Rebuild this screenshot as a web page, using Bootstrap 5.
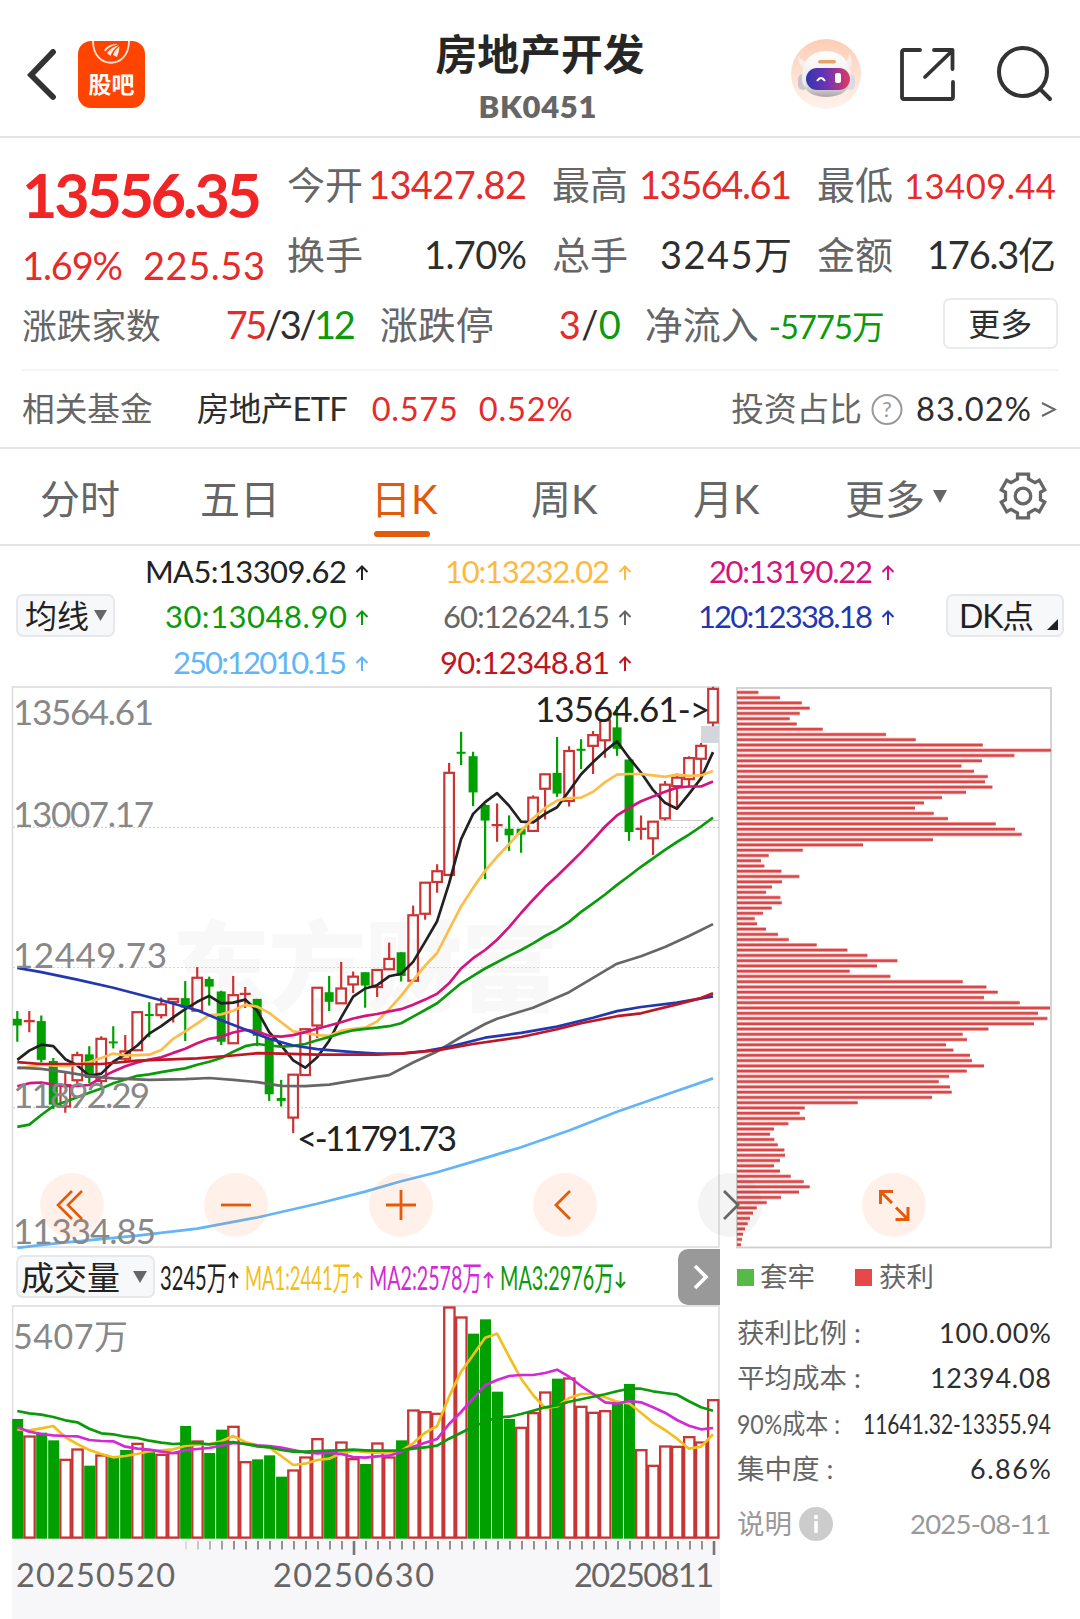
<!DOCTYPE html>
<html lang="zh-CN">
<head>
<meta charset="utf-8">
<meta name="viewport" content="width=device-width, initial-scale=1">
<title>房地产开发 BK0451</title>
<link rel="stylesheet" href="https://cdn.jsdelivr.net/npm/bootstrap@5.3.0/dist/css/bootstrap.min.css">
<style>
:root{--up:#e52b2b;--down:#0a9a0a;--ink:#2e2e2e;--dim:#666;--line:#e2e4e6}
body{font-family:Lato,"Noto Sans CJK SC",sans-serif;line-height:1;color:var(--ink);background:#fff;width:1080px;height:1619px;overflow:hidden}
svg{display:block;flex:none}
span{white-space:nowrap}
.up{color:var(--up)}.down{color:var(--down)}.dim{color:var(--dim)}
.f27{font-size:27.5px}.f32{font-size:32.7px}.f34{font-size:34.7px}.f38{font-size:38px}
.topbar{height:138px;border-bottom:2px solid var(--line);padding:38px 27px 0 27px}
.side-l{width:262px;padding-top:3px}.side-r{width:262px}
.app-logo{width:67px;height:67px;border-radius:13px;background:#ff4400;color:#fff;font-weight:700;font-size:23px;margin-left:21px;padding-bottom:12px}
.app-logo svg{left:13px;top:0}
.title-text{font-size:41.8px;font-weight:600;color:#262626;margin-top:-4px}
.code-text{font-size:31px;font-weight:800;color:var(--dim);margin:15px 5px 0 0}
.quote{height:231px;padding:27px 0 0 22px}
.price-col{width:265px;margin-top:-1px}
.price{font-size:61px;font-weight:700;color:#f02626}
.cells{width:768px;display:grid;grid-template-columns:240px 240px 239px;column-gap:25px}
.cells>div{height:70px}
.mix{height:60px}
.more-btn{width:115px;height:51px;border:2px solid #e8eaec;border-radius:7px;font-size:32px;margin:-7px 0 0 58px}
.fund{margin:0 22px;height:78px;border-top:2px solid #f3f4f5;padding-top:22px}
.tabs-k{height:99px;border-top:2px solid var(--line);border-bottom:2px solid var(--line);font-size:40px;color:var(--dim)}
.tabs-k>div{height:95px;padding-top:30px}
.tab-on{color:#e35a0a}
.tab-on i{display:block;width:56px;height:6px;border-radius:3px;background:#e35a0a;margin:12px 0 0 3px}
.ma-bar{height:139px;padding:8px 16px 0}
.chip{height:43px;border:2px solid #e6e8eb;border-radius:7px;background:#f7f8fa;color:#222;font-size:32px}
.ma-grid{display:grid;grid-template-columns:254px 263px 263px;grid-auto-rows:45.6px;font-size:31px;width:832px;align-content:start;padding-top:1.5px}
.ma-grid>div{display:flex;justify-content:flex-end;align-items:baseline}
.ma-grid svg{margin-left:8px}
.charts{height:563px;padding-left:12px}
.charts svg{overflow:visible}
.ctl{left:40px;top:488px;gap:100.4px}
.ctl>div{width:64px;height:64px;border-radius:50%;background:rgba(255,113,40,.1)}
.ctl>.off{background:rgba(60,60,60,.06)}
.lower{padding-left:12px}
.vol-head{width:708px;height:57px;padding-left:4px}
.vol-head .chip span{padding-top:1px}
.vol-figs{font-size:33.5px;width:523px;padding-left:5px}
.vol-figs span{padding-top:2px}
.vol-next{width:42px;height:56px;border-radius:10px 0 0 10px;background:#999}
.costs{width:314px;margin-left:16px;padding-top:15px}
.sq{width:17px;height:17px}
.cost-row{height:45.3px}
.val{font-size:27px}
.info-dot{width:34px;height:34px;border-radius:50%;background:#ccc}
</style>
</head>
<body>
<header class="topbar d-flex justify-content-between align-items-start">
  <div class="side-l d-flex align-items-center">
    <svg width="30" height="52" viewBox="0 0 30 52"><path d="M26 3L4 26L26 48" fill="none" stroke="#333" stroke-width="5.8" stroke-linecap="round"/></svg>
    <div class="app-logo position-relative d-flex align-items-end justify-content-center">
      <svg class="position-absolute" width="41" height="26" viewBox="0 0 41 26"><path d="M2 0C2 29 38 29 38 0" fill="none" stroke="#ffe3d8" stroke-width="1.8"/><path d="M13 9Q18 2 27 3.500Q18 5 14.500 10.500ZM16 12Q21 5 28 4.500Q22 8 19.500 15ZM22 14Q24 8 28.500 5.500Q28 12 26 16Z" fill="#ffe9df"/></svg>
      <span>股吧</span>
    </div>
  </div>
  <div class="text-center">
    <div class="title-text"><span>房地产开发</span></div>
    <div class="code-text"><span class="fit" data-w="118">BK0451</span></div>
  </div>
  <div class="side-r d-flex">
    <svg width="70" height="72" viewBox="0 0 70 72">
      <defs><linearGradient id="sky" x2="0" y2="1"><stop stop-color="#fdcdb4"/><stop offset="1" stop-color="#fff3ed"/></linearGradient><linearGradient id="visor"><stop stop-color="#3436ae"/><stop offset=".5" stop-color="#7134b0"/><stop offset="1" stop-color="#e23a62"/></linearGradient><linearGradient id="shell" x2="0" y2="1"><stop stop-color="#fff"/><stop offset=".7" stop-color="#ece9ea"/><stop offset="1" stop-color="#aaa5ab"/></linearGradient></defs>
      <circle cx="35" cy="36" r="35" fill="url(#sky)"/>
      <path d="M7 17Q9 23 16 23L14 31Q6 26 7 17ZM58 15Q62 20 60 29L53 26Q58 22 58 15Z" fill="#f6eeec"/>
      <rect x="7" y="36" width="10" height="16" rx="5" fill="#cbc6cb"/><rect x="55" y="36" width="9" height="16" rx="4.500" fill="#dedade"/>
      <path d="M11 38Q12 14 35 13Q58 14 60 38Q61 58 35 59Q10 58 11 38Z" fill="url(#shell)"/>
      <rect x="27" y="22" width="18" height="3.500" rx="1.700" fill="#e5a36d"/>
      <rect x="15" y="30" width="44" height="22" rx="11" fill="url(#visor)"/>
      <path d="M26 43Q30 37 34 43" fill="none" stroke="#fff" stroke-width="2"/><rect x="44" y="35" width="6" height="10" rx="2" fill="#fff"/>
    </svg>
    <svg style="margin:8px 0 0 38px" width="56" height="56" viewBox="0 0 56 56" fill="none" stroke="#333" stroke-width="3.8" stroke-linecap="round" stroke-linejoin="round"><path d="M21 4H5Q3 4 3 6V51Q3 53 5 53H52Q54 53 54 51V36M35 4H53.500V23M53 5L26 31"/></svg>
    <svg style="margin:7px 0 0 41px" width="58" height="58" viewBox="0 0 58 58" fill="none" stroke="#333" stroke-width="4" stroke-linecap="round"><circle cx="27" cy="27" r="24"/><path d="M44 44L54 54"/></svg>
  </div>
</header>

<section class="quote">
  <div class="d-flex">
    <div class="price-col">
      <div class="price"><span class="fit" data-w="240">13556.35</span></div>
      <div class="f38 up d-flex" style="margin-top:21px"><span class="fit" data-w="101">1.69%</span><span class="fit" data-w="122" style="margin-left:20px">225.53</span></div>
    </div>
    <div class="cells f38">
      <div class="d-flex justify-content-between align-items-baseline"><span class="dim">今开</span><span class="up fit" data-w="159">13427.82</span></div>
      <div class="d-flex justify-content-between align-items-baseline"><span class="dim">最高</span><span class="up fit" data-w="153">13564.61</span></div>
      <div class="d-flex justify-content-between align-items-baseline"><span class="dim">最低</span><span class="up fit f34" data-w="152">13409.44</span></div>
      <div class="d-flex justify-content-between align-items-baseline"><span class="dim">换手</span><span class="fit" data-w="103">1.70%</span></div>
      <div class="d-flex justify-content-between align-items-baseline"><span class="dim">总手</span><span class="fit" data-w="132">3245万</span></div>
      <div class="d-flex justify-content-between align-items-baseline"><span class="dim">金额</span><span class="fit" data-w="129">176.3亿</span></div>
    </div>
  </div>
  <div class="mix d-flex align-items-baseline f38">
    <span class="dim f34">涨跌家数</span>
    <span class="fit" data-w="130" style="margin-left:65px"><b class="up fw-normal">75</b>/3/<b class="down fw-normal">12</b></span>
    <span class="dim" style="margin-left:24px">涨跌停</span>
    <span class="fit" data-w="62" style="margin-left:65px"><b class="up fw-normal">3</b>/<b class="down fw-normal">0</b></span>
    <span class="dim" style="margin-left:24px">净流入</span>
    <span class="down fit f32" data-w="116" style="margin-left:10px">-5775万</span>
    <div class="more-btn d-flex align-self-start align-items-center justify-content-center">更多</div>
  </div>
</section>

<section class="fund d-flex align-items-baseline f32">
  <span class="dim">相关基金</span>
  <span class="fit" data-w="151" style="margin-left:44px">房地产ETF</span>
  <span class="up fit" data-w="86" style="margin-left:24px">0.575</span>
  <span class="up fit" data-w="94" style="margin-left:21px">0.52%</span>
  <span class="dim ms-auto">投资占比</span>
  <svg class="align-self-start" style="margin:1px 13px 0 9px" width="32" height="32" viewBox="0 0 32 32"><circle cx="16" cy="15.500" r="14.5" fill="none" stroke="#999" stroke-width="2"/><text x="16" y="23" text-anchor="middle" font-size="22" fill="#999">?</text></svg>
  <span class="fit" data-w="115">83.02%</span>
  <svg class="align-self-start" style="margin:9px 1px 0 10px" width="16" height="16" viewBox="0 0 16 16"><path d="M1 1L14 7.5L1 14" fill="none" stroke="#666" stroke-width="2"/></svg>
</section>

<nav class="tabs-k d-flex">
  <div style="width:200px;padding-left:40px"><span>分时</span></div>
  <div style="width:171px"><span>五日</span></div>
  <div class="tab-on" style="width:160px"><span>日K</span><i></i></div>
  <div style="width:162px"><span>周K</span></div>
  <div style="width:152px"><span>月K</span></div>
  <div class="d-flex" style="width:153px"><span>更多</span><svg style="margin:11px 0 0 8px" width="14" height="13"><path d="M0 0H14L7 13Z" fill="#666"/></svg></div>
  <div style="padding-top:22px"><svg width="50" height="50" viewBox="-25 -25 50 50" fill="none" stroke="#666" stroke-width="3.3"><polygon id="gear"/><circle r="7.8"/></svg></div>
</nav>

<section class="ma-bar d-flex">
  <div class="chip d-flex align-items-center" style="width:99px;margin-top:40px;padding-left:7px"><span>均线</span><svg style="margin-left:5px" width="13" height="11"><path d="M0 0H13L6.500 11Z" fill="#666"/></svg></div>
  <div class="ma-grid" id="ma"></div>
  <div class="chip d-flex align-items-center position-relative" style="width:118px;margin-top:40px;padding-left:11px"><span class="fit" data-w="75">DK点</span><svg class="position-absolute bottom-0 end-0" style="margin:0 4px 5px 0" width="11" height="11"><path d="M11 0V11H0Z" fill="#222"/></svg></div>
</section>

<section class="charts position-relative d-flex">
  <svg id="kline" width="709" height="563" viewBox="12 685 709 563"></svg>
  <svg id="chips" style="margin-left:15px" width="318" height="563" viewBox="736 685 318 563"></svg>
  <div class="ctl position-absolute d-flex">
    <div><svg width="64" height="64" fill="none" stroke="#e35a0a" stroke-width="2.6"><path d="M32 18L18 32L32 46M42 18L28 32L42 46"/></svg></div>
    <div><svg width="64" height="64" fill="none" stroke="#e35a0a" stroke-width="2.8"><path d="M17 32H47"/></svg></div>
    <div><svg width="64" height="64" fill="none" stroke="#e35a0a" stroke-width="2.8"><path d="M17 32H47M32 17V47"/></svg></div>
    <div><svg width="64" height="64" fill="none" stroke="#e35a0a" stroke-width="2.8"><path d="M37 18L23 32L37 46"/></svg></div>
    <div class="off"><svg width="64" height="64" fill="none" stroke="#666" stroke-width="2.8"><path d="M26 18L40 32L26 46"/></svg></div>
    <div><svg width="64" height="64" fill="none" stroke="#e35a0a" stroke-width="3"><path d="M31 18.500H18.500V31M18.500 18.500L30 30M34 34.500L46 46.500M33.500 46.500H46V34"/></svg></div>
  </div>
</section>

<section class="lower d-flex">
  <div>
    <div class="vol-head d-flex align-items-center">
      <div class="chip d-flex align-items-center" style="width:139px;padding-left:3px;font-size:33px"><span>成交量</span><svg style="margin-left:13px" width="14" height="12"><path d="M0 0H14L7 12Z" fill="#666"/></svg></div>
      <div class="vol-figs d-flex align-items-center" id="volhead"></div>
      <div class="vol-next d-flex align-items-center justify-content-center"><svg style="margin-left:3px" width="20" height="28"><path d="M4 3L15 14L4 25" fill="none" stroke="#fff" stroke-width="3.6"/></svg></div>
    </div>
    <svg id="vol" width="709" height="314" viewBox="12 1305 709 314"></svg>
  </div>
  <div class="costs f27">
    <div class="dim d-flex align-items-center" style="height:28px"><i class="sq" style="background:#57b947"></i><span style="margin-left:6px">套牢</span><i class="sq" style="background:#e84848;margin-left:40px"></i><span style="margin-left:7px">获利</span></div>
    <div style="padding-top:28px">
      <div class="cost-row d-flex justify-content-between align-items-baseline"><span class="dim">获利比例<span style="margin-left:7px">:</span></span><span class="val fit" data-w="112">100.00%</span></div>
      <div class="cost-row d-flex justify-content-between align-items-baseline"><span class="dim">平均成本<span style="margin-left:7px">:</span></span><span class="val fit" data-w="121">12394.08</span></div>
      <div class="cost-row d-flex justify-content-between align-items-baseline"><span class="dim squeeze" data-w="103">90%成本 :</span><span class="val squeeze" data-w="188">11641.32-13355.94</span></div>
      <div class="cost-row d-flex justify-content-between align-items-baseline"><span class="dim">集中度<span style="margin-left:7px">:</span></span><span class="val fit" data-w="81">6.86%</span></div>
    </div>
    <div class="d-flex align-items-center" style="color:#999;margin-top:7px;height:34px"><span>说明</span><div class="info-dot" style="margin-left:7px"><svg width="34" height="34"><circle cx="17" cy="10" r="2.200" fill="#fff"/><path d="M17 14V26" stroke="#fff" stroke-width="3.500"/></svg></div><span class="ms-auto fit" data-w="141">2025-08-11</span></div>
  </div>
</section>

<script src="https://cdn.jsdelivr.net/npm/bootstrap@5.3.0/dist/js/bootstrap.bundle.min.js"></script>
<script>
const $ = id => document.getElementById(id);
const UP = '#c93434', DOWN = '#00a000';

// Settings gear: six teeth
const pt = (r, a) => { a *= Math.PI / 180; return (r * Math.sin(a)).toFixed(1) + ',' + (-r * Math.cos(a)).toFixed(1); };
let g = '';
for (let k = 0; k < 6; k++) { const a = k * 60; g += [pt(17.9, a - 18), pt(22.6, a - 14), pt(22.6, a + 14), pt(17.9, a + 18)].join(' ') + ' '; }
$('gear').setAttribute('points', g);

// Moving average legend
$('ma').innerHTML = [['MA5:13309.62', '#222', 202], ['10:13232.02', '#fdb940', 165], ['20:13190.22', '#d4147e', 164],
  ['30:13048.90', '#0a9a0a', 182], ['60:12624.15', '#666', 167], ['120:12338.18', '#2237b0', 175],
  ['250:12010.15', '#63b5f5', 174], ['90:12348.81', '#be1622', 170]].map(m =>
  `<div style="color:${m[1]}"><span class="fit" data-w="${m[2]}">${m[0]}</span><svg width="14" height="19" fill="none" stroke="currentColor" stroke-width="2"><path d="M7 16V3M1.500 8L7 2.500L12.500 8"/></svg></div>`).join('');

const X = i => 17.3 + i * 11.995;
const path = (d, Y) => d.map((p, i) => { const [a, b] = Array.isArray(p) ? p : [i, p]; return X(a).toFixed(1) + ',' + Y(b).toFixed(1); }).join(' ');
const line = (d, c, Y, w) => `<polyline points="${path(d, Y)}" fill="none" stroke="${c}" stroke-width="${w || 2.7}" stroke-linejoin="round"/>`;
const label = (t, x, y, w, c, s) => `<text x="${x}" y="${y}" fill="${c}" font-size="${s}" textLength="${w}">${t}</text>`;

// Daily candles: colour, high, body top, body bottom, low
const K = 'g895,916,934,978 r895,919,925,952 g907,922,1027,1034 g1022,1030,1148,1160 r1062,1095,1153,1170 r1005,1014,1082,1092 g990,1012,1076,1090 r963,970,1084,1094 g936,977,981,996 r960,1004,1024,1030 r898,898,1001,1001 g871,903,908,966 r858,877,906,915 r860,862,870,926 g814,860,886,976 r776,805,894,894 g802,808,829,880 g840,842,978,987 r800,852,982,982 r830,847,850,887 g862,862,962,990 g968,968,1120,1138 g1081,1130,1138,1153 r1067,1067,1183,1225 r944,944,1068,1068 r832,832,934,968 g800,844,870,895 r762,834,874,874 r788,802,823,846 g790,790,826,886 r784,784,830,857 r710,754,782,782 g736,736,800,815 r610,636,813,813 r548,548,632,648 r498,517,546,575 r224,251,527,527 g140,194,198,230 g194,206,304,341 g335,338,380,538 r334,391,394,437 g366,402,420,462 g402,402,418,467 r312,318,408,408 r255,255,294,377 g154,251,307,316 r179,192,327,342 g160,186,189,241 r138,149,178,254 r106,109,163,210 g70,128,186,205 g215,215,411,435 r366,401,404,432 r383,383,428,473 r273,283,374,380 r253,264,287,345 r206,211,268,290 r170,178,213,262 r18,24,115,125'.split(' ');
const KY = v => 680 + v / 2.7034;
let s = '<rect x="12.5" y="687" width="706.5" height="560" fill="none" stroke="#dcdcdc" stroke-width="1.6"/>';
s += '<g font-family="Noto Sans CJK SC" font-weight="900" fill="#f8f8f8" font-size="98"><text x="172" y="1003" textLength="387">东方财富</text></g>';
[827.3, 967.5, 1107.7].forEach(y => s += `<path d="M13 ${y}H719" stroke="#d4d4d4" stroke-width="1.200" stroke-dasharray="2 2"/>`);
s += '<path d="M660 820.500H719" stroke="#ccc"/><rect x="701" y="726" width="18" height="17" fill="#d3d6dc"/>';
K.forEach((k, i) => {
  const c = k[0] === 'g' ? DOWN : UP, [h, t, b, l] = k.slice(1).split(',').map(v => KY(+v)), x = X(i);
  if (k[0] === 'g') s += `<path d="M${x} ${h}V${l}" stroke="${c}" stroke-width="2.200"/><rect x="${x - 4.5}" y="${t}" width="9" height="${Math.max(2, b - t)}" fill="${c}"/>`;
  else if (b - t < 2.5) s += `<path d="M${x} ${h}V${l}M${x - 5.5} ${(t + b) / 2}H${x + 5.5}" stroke="${c}" stroke-width="2.200"/>`;
  else s += `<path d="M${x} ${h}V${t}M${x} ${b}V${l}" stroke="${c}" stroke-width="2.200"/><rect x="${x - 4.8}" y="${t}" width="9.600" height="${b - t}" fill="none" stroke="${c}" stroke-width="2.200"/>`;
});
s += line([[0,1535],[3,1524],[10,1502],[15,1483],[20,1453],[25,1416],[29,1383],[32,1355],[35,1331],[38,1302],[42,1263],[46,1218],[50,1167],[54,1122],[58,1077]], '#63b5f5', KY);
s += line([1027,1002,986,990,1025,1042,1070,1064,1032,1012,988,956,936,912,890,870,854,874,872,864,894,952,988,1028,1048,1020,975,912,856,834,825,801,794,762,708,652,550,430,362,330,306,340,383,385,362,344,300,255,222,192,166,210,250,297,332,348,308,266,195], '#222', KY);
s += line([1051,1045,1040,1042,1044,1040,1033,1022,1010,1015,1014,1013,1000,970,950,928,906,904,894,878,883,900,925,950,954,960,962,948,943,940,923,890,854,812,772,738,675,612,562,516,478,444,408,374,346,326,319,318,302,276,256,254,254,258,262,256,259,258,246], '#fdbd4b', KY);
s += line([1098,1090,1088,1094,1098,1097,1095,1075,1058,1044,1034,1026,1020,1008,997,982,970,964,953,946,950,962,964,960,952,943,934,925,915,908,903,896,890,878,864,848,820,780,752,730,702,668,630,594,560,530,498,466,432,396,366,346,328,315,302,291,288,288,274], '#d4147e', KY);
s += line([1208,1202,1176,1152,1140,1128,1116,1104,1090,1080,1070,1066,1060,1055,1050,1040,1032,1022,1005,990,984,988,991,989,984,974,965,955,947,943,940,936,928,910,892,874,847,820,800,780,763,746,730,712,692,675,654,627,604,580,554,530,505,482,459,438,418,396,372], '#0a9a0a', KY);
s += line([[0,1048],[2,1051],[4,1060],[6,1071],[8,1077],[11,1081],[14,1079],[16,1076],[18,1081],[20,1087],[22,1097],[24,1098],[26,1094],[28,1083],[30,1073],[31,1068],[33,1034],[35,1004],[37,965],[39,930],[40,916],[43,886],[46,844],[48,805],[50,767],[52,747],[54,722],[56,692],[58,660]], '#666', KY);
s += line([[0,778],[2,790],[5,810],[8,832],[12,866],[15,893],[17,920],[19,945],[21,970],[23,988],[25,998],[28,1006],[30,1010],[32,1010],[34,1003],[36,992],[39,967],[42,954],[45,937],[48,913],[50,895],[52,884],[55,872],[58,855]], '#2237b0', KY);
s += line([[0,1033],[2,1038],[7,1038],[10,1029],[15,1023],[18,1015],[20,1009],[22,1010],[25,1013],[30,1013],[32,1010],[35,1001],[38,984],[42,965],[45,944],[47,928],[50,909],[52,901],[55,877],[57,860],[58,847]], '#be1622', KY);
[['13564.61', 724.5, 141], ['13007.17', 827, 141], ['12449.73', 968, 154], ['11892.29', 1108, 137], ['11334.85', 1244, 143]].forEach(a => s += label(a[0], 13, a[1], a[2], '#888', 35));
s += label('13564.61-&gt;', 535, 722, 175, '#222', 35) + label('&lt;-11791.73', 297, 1151, 160, '#222', 35);
$('kline').innerHTML = s;

// Cost distribution
const C = [115,180,245,269,239,209,230,308,498,587,788,993,883,786,724,762,803,795,817,738,666,612,585,641,684,827,885,905,639,429,248,146,123,133,184,238,186,156,138,181,185,155,129,104,111,138,174,206,290,382,442,532,471,389,511,728,799,833,792,899,990,954,982,942,805,728,741,678,700,750,756,792,740,687,656,690,695,636,413,254,239,255,205,162,150,163,173,193,195,180,162,180,212,251,269,237,183,140,110,99,90,83,75,69,66,63];
s = '<rect x="737" y="688" width="314" height="559.500" fill="none" stroke="#cfcfcf" stroke-width="1.800"/>';
C.forEach((v, i) => { const y = 692.4 + i * 5.26, w = (v - 51) / 3; s += `<rect x="737" y="${(y - 2).toFixed(1)}" width="${w}" height="4" fill="#f7b5b5"/><rect x="737" y="${(y - 1.2).toFixed(1)}" width="${w}" height="2.400" fill="#d84848"/>`; });
$('chips').innerHTML = s;

// Volume legend
$('volhead').innerHTML = [['3245万', '#222', 67, 1], ['MA1:2441万', '#f2c01c', 106, 1], ['MA2:2578万', '#d22ad6', 113, 1], ['MA3:2976万', '#0a9a0a', 114, 0]].map(m =>
  `<span class="squeeze" data-w="${m[2]}" style="color:${m[1]}">${m[0]}</span><svg style="margin:6px 6px 0 1px" width="11" height="18" fill="none" stroke="${m[1]}" stroke-width="2"><path d="${m[3] ? 'M5.500 17V2M1 7L5.500 2L10 7' : 'M5.500 1V16M1 11L5.500 16L10 11'}"/></svg>`).join('');

// Volume bars
const V = 'g537 r588 g578 g601 r658 r627 g677 r645 g651 g630 r610 g628 r643 r638 g558 r603 g639 g569 r559 r665 g658 g646 g710 r690 r651 r596 g638 r606 r656 g672 r609 r651 g601 r510 r515 r520 r201 r231 g281 g238 g455 g537 r562 r518 r456 g416 r414 r499 r517 r512 g488 g432 r629 r676 r618 r619 r590 r606 r479'.split(' ');
const VY = v => 1240 + v / 3;
s = '<rect x="12" y="1540" width="708" height="79" fill="#f7f7fa"/><rect x="12.500" y="1306" width="706.500" height="232.500" fill="none" stroke="#dcdcdc" stroke-width="1.600"/>';
s += '<text x="13" y="1348.500" fill="#888" font-size="34" textLength="115">5407万</text>';
V.forEach((v, i) => {
  const x = 12.2 + i * 11.995, y = VY(+v.slice(1));
  s += v[0] === 'g' ? `<rect x="${x}" y="${y}" width="11" height="${1538.6 - y}" fill="${DOWN}"/>`
    : `<rect x="${x + .2}" y="${y + .5}" width="10.300" height="${1537.1 - y}" fill="#fff" stroke="${UP}" stroke-width="2.300"/>`;
});
s += line([568,571,565,558,592,612,630,642,652,648,642,634,631,628,618,614,612,604,588,606,616,622,648,675,671,660,656,640,633,636,638,637,633,610,578,558,470,395,345,293,281,350,416,465,504,499,474,462,462,472,485,490,518,548,570,596,626,620,583], '#f2c01c', VY);
s += line([562,575,582,586,588,589,600,603,604,620,626,629,635,639,631,627,624,617,609,612,616,618,623,630,637,640,638,642,651,653,649,647,636,620,608,597,552,516,475,436,420,408,405,405,399,389,410,438,462,487,491,483,487,502,518,540,557,568,564], '#d22ad6', VY);
s += line([513,520,524,531,541,547,566,580,583,590,594,602,608,612,610,609,613,609,606,612,619,622,630,635,635,633,632,631,629,631,632,632,631,626,622,617,596,578,560,545,532,530,522,512,502,496,485,478,470,463,454,446,446,454,459,464,484,502,512], '#0a9a0a', VY);
for (let i = 0; i < 45; i++) {
  const big = i === 14 || i === 44, x = 186 + i * 12;
  s += `<path d="M${x} 1541V${big ? 1555 : 1549.5}" stroke="#777" stroke-width="${big ? 2.6 : 1.6}" opacity="${Math.min(1, .25 + i * .2)}"/>`;
}
s += label('20250520', 16, 1587, 159, '#666', 32.5) + label('20250630', 273, 1587, 161, '#666', 32.5) + label('20250811', 574, 1587, 140, '#666', 32.5);
$('vol').innerHTML = s;

document.querySelectorAll('.fit').forEach(e => {
  const ls = (e.dataset.w - e.getBoundingClientRect().width) / (e.textContent.length - 1);
  e.style.letterSpacing = ls + 'px';
  e.style.marginRight = -ls + 'px';
});
document.querySelectorAll('.squeeze').forEach(e => {
  const n = e.getBoundingClientRect().width, right = e.classList.contains('val');
  e.style.flex = 'none';
  e.style.transformOrigin = right ? 'right' : 'left';
  e.style.transform = `scaleX(${e.dataset.w / n})`;
  e.style[right ? 'marginLeft' : 'marginRight'] = e.dataset.w - n + 'px';
});
</script>
</body>
</html>
